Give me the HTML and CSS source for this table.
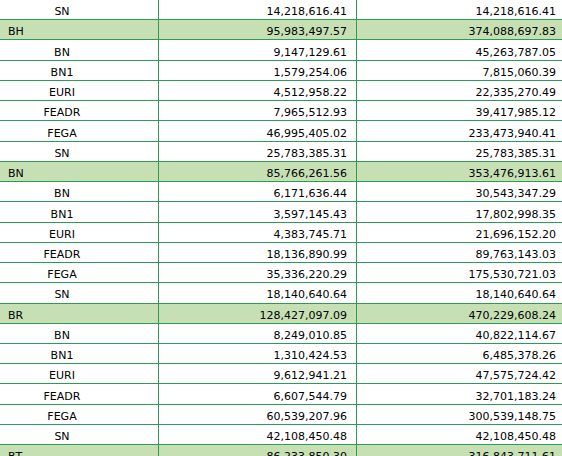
FILE: index.html
```html
<!DOCTYPE html>
<html lang="en">
<head>
  <meta charset="UTF-8" />
  <meta name="viewport" content="width=device-width, initial-scale=1.0" />
  <title>Budget breakdown</title>
  <link rel="stylesheet" href="styles.css">
</head>
<body>
  <table class="report">
    <colgroup>
      <col class="col-label">
      <col class="col-amount">
      <col class="col-total">
    </colgroup>
    <tbody>
      <tr><td class="label">SN</td><td class="num">14,218,616.41</td><td class="num">14,218,616.41</td></tr>

      <tr class="group"><td class="label">BH</td><td class="num">95,983,497.57</td><td class="num">374,088,697.83</td></tr>
      <tr><td class="label">BN</td><td class="num">9,147,129.61</td><td class="num">45,263,787.05</td></tr>
      <tr><td class="label">BN1</td><td class="num">1,579,254.06</td><td class="num">7,815,060.39</td></tr>
      <tr><td class="label">EURI</td><td class="num">4,512,958.22</td><td class="num">22,335,270.49</td></tr>
      <tr><td class="label">FEADR</td><td class="num">7,965,512.93</td><td class="num">39,417,985.12</td></tr>
      <tr><td class="label">FEGA</td><td class="num">46,995,405.02</td><td class="num">233,473,940.41</td></tr>
      <tr><td class="label">SN</td><td class="num">25,783,385.31</td><td class="num">25,783,385.31</td></tr>

      <tr class="group"><td class="label">BN</td><td class="num">85,766,261.56</td><td class="num">353,476,913.61</td></tr>
      <tr><td class="label">BN</td><td class="num">6,171,636.44</td><td class="num">30,543,347.29</td></tr>
      <tr><td class="label">BN1</td><td class="num">3,597,145.43</td><td class="num">17,802,998.35</td></tr>
      <tr><td class="label">EURI</td><td class="num">4,383,745.71</td><td class="num">21,696,152.20</td></tr>
      <tr><td class="label">FEADR</td><td class="num">18,136,890.99</td><td class="num">89,763,143.03</td></tr>
      <tr><td class="label">FEGA</td><td class="num">35,336,220.29</td><td class="num">175,530,721.03</td></tr>
      <tr><td class="label">SN</td><td class="num">18,140,640.64</td><td class="num">18,140,640.64</td></tr>

      <tr class="group"><td class="label">BR</td><td class="num">128,427,097.09</td><td class="num">470,229,608.24</td></tr>
      <tr><td class="label">BN</td><td class="num">8,249,010.85</td><td class="num">40,822,114.67</td></tr>
      <tr><td class="label">BN1</td><td class="num">1,310,424.53</td><td class="num">6,485,378.26</td></tr>
      <tr><td class="label">EURI</td><td class="num">9,612,941.21</td><td class="num">47,575,724.42</td></tr>
      <tr><td class="label">FEADR</td><td class="num">6,607,544.79</td><td class="num">32,701,183.24</td></tr>
      <tr><td class="label">FEGA</td><td class="num">60,539,207.96</td><td class="num">300,539,148.75</td></tr>
      <tr><td class="label">SN</td><td class="num">42,108,450.48</td><td class="num">42,108,450.48</td></tr>

      <tr class="group"><td class="label">BT</td><td class="num">86,233,850.30</td><td class="num">316,843,711.61</td></tr>
    </tbody>
  </table>
</body>
</html>
```

FILE: styles.css
```css
* {
  box-sizing: border-box;
}
body {
  margin: 0;
  background: #fff;
  color: #000;
  font-family: "DejaVu Sans", Verdana, sans-serif;
  font-size: 11px;
  overflow: hidden;
}
.report {
  border-collapse: collapse;
  table-layout: fixed;
  width: 566px;
  margin-top: -1px;
  margin-left: -1px;
}
.col-label {
  width: 159px;
}
.col-amount {
  width: 198px;
}
.col-total {
  width: 209px;
}
.report td {
  height: 20.24px;
  padding: 5.2px 9px 0 0;
  line-height: 14px;
  border: 1px solid #2f9a55;
  vertical-align: top;
  white-space: nowrap;
}
.report td.label {
  text-align: center;
  padding-right: 34px;
}
.report td.num {
  text-align: right;
}
.group td {
  background: #c6e0b4;
}
.group td.label {
  text-align: left;
  padding-left: 8px;
}
```
